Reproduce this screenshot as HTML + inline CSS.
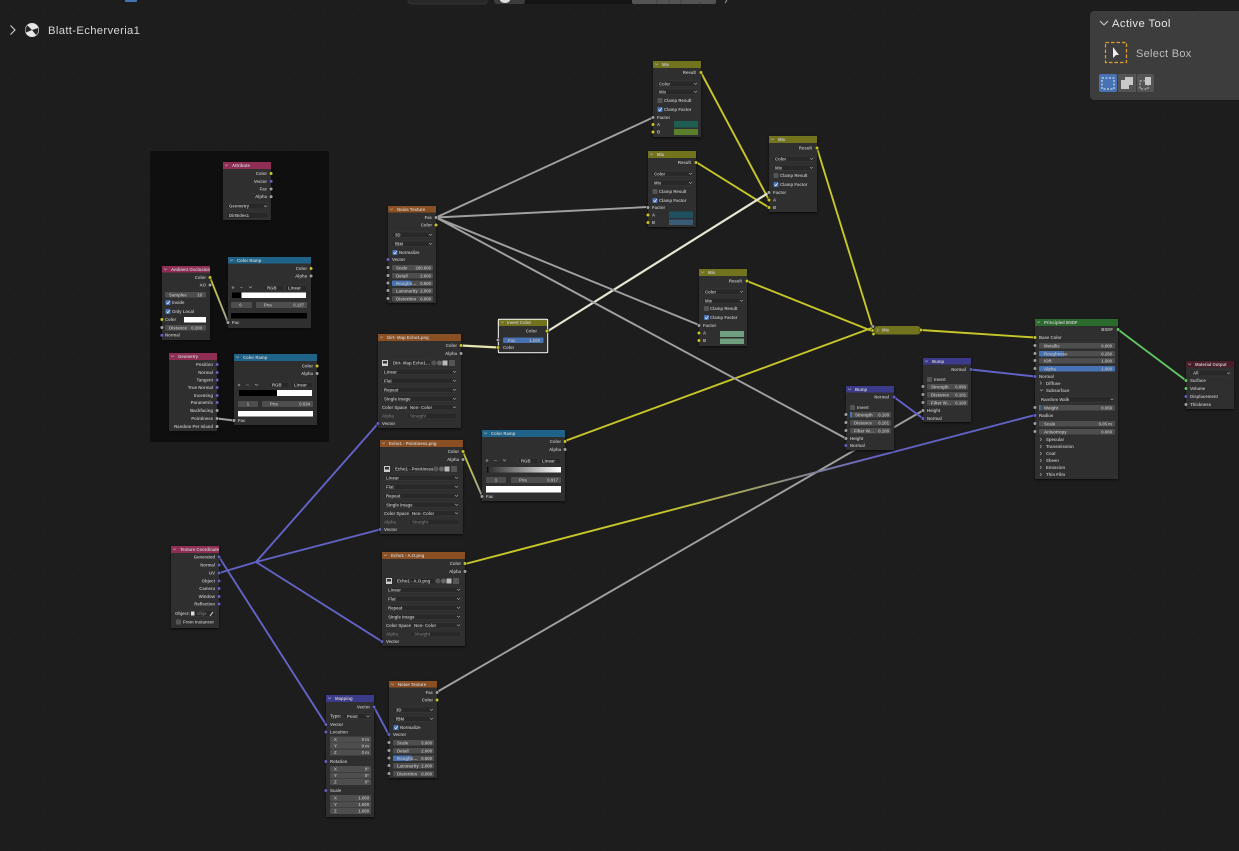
<!DOCTYPE html>
<html><head><meta charset="utf-8"><title>Blatt-Echerveria1</title>
<style>
html,body{margin:0;padding:0;background:#1d1d1d;width:1239px;height:851px;overflow:hidden}
svg{position:absolute;left:0;top:0;display:block}
text{font-family:"Liberation Sans",sans-serif}
.all text{font-size:4.3px;fill:#b4b4b4;font-weight:bold}
.all .h{fill:#c4c4c4}
.all .m{fill:#6c6c6c}
.r{text-anchor:end}
.mid{text-anchor:middle}
.b{fill:#2f2f2f;filter:drop-shadow(0 1px 1px #0a0a0a)}
.f{fill:#4e4e4e}
.d{fill:#282828;stroke:#3f3f3f;stroke-width:.5}
.u{fill:#4772b3}
.c{fill:none;stroke:#aaa;stroke-width:.6}
.k{fill:#545454}
.ck{fill:#4772b3}
.w{fill:none;stroke-width:1.9}
.sy{fill:#c7c729;stroke:#141414;stroke-width:.5}
.sp{fill:#6363c7;stroke:#141414;stroke-width:.5}
.sg{fill:#a1a1a1;stroke:#141414;stroke-width:.5}
.sn{fill:#63c763;stroke:#141414;stroke-width:.5}
.all{filter:blur(.38px)}
</style></head><body>
<svg width="1239" height="851" viewBox="0 0 1239 851" xmlns="http://www.w3.org/2000/svg">
<defs>
<pattern id="grid" x="8" y="8" width="35" height="35" patternUnits="userSpaceOnUse"><circle cx="1" cy="1" r=".8" fill="#252525"/></pattern>
<linearGradient id="g1" gradientUnits="userSpaceOnUse" x1="210" y1="277" x2="228" y2="322"><stop offset="0" stop-color="#c7c729"/><stop offset="1" stop-color="#a1a1a1"/></linearGradient>
<linearGradient id="g2" gradientUnits="userSpaceOnUse" x1="463" y1="452" x2="482" y2="496"><stop offset="0" stop-color="#c7c729"/><stop offset="1" stop-color="#a1a1a1"/></linearGradient>
<linearGradient id="g3" gradientUnits="userSpaceOnUse" x1="465" y1="564" x2="1035" y2="415"><stop offset="0" stop-color="#c7c729"/><stop offset=".35" stop-color="#c7c729"/><stop offset=".72" stop-color="#6363c7"/><stop offset="1" stop-color="#6363c7"/></linearGradient>
<linearGradient id="rg" x1="0" x2="1" y1="0" y2="0"><stop offset="0" stop-color="#000"/><stop offset=".03" stop-color="#333"/><stop offset="1" stop-color="#fff"/></linearGradient>
</defs>
<rect width="1239" height="851" fill="#1d1d1d"/>
<rect width="1239" height="851" fill="url(#grid)"/>

<!-- top clipped header widgets -->
<rect x="125" y="-4" width="12" height="6" rx="1" fill="#4772b3"/>
<rect x="408" y="-6" width="79" height="10" rx="3" fill="#282828" stroke="#3a3a3a" stroke-width=".8"/>
<rect x="494" y="-6" width="31" height="10" rx="3" fill="#3d3d3d"/>
<rect x="525" y="-6" width="107" height="10" fill="#141414"/>
<rect x="632" y="-6" width="84" height="10" rx="2" fill="#545454"/>
<path d="M700 2v2M657 -1v5M681 -1v5M669 0v3" stroke="#3a3a3a" stroke-width=".8"/>
<ellipse cx="505" cy="0" rx="5" ry="3" fill="#ddd"/>
<path d="M725 3l2-3" stroke="#999" stroke-width="1"/>

<!-- breadcrumb -->
<path d="M10.500 25.500l4.500 4.500-4.500 4.500" fill="none" stroke="#d0d0d0" stroke-width="1.100"/>
<circle cx="32" cy="30" r="6.500" fill="#e6e6e6" stroke="#e6e6e6" stroke-width="1"/>
<path d="M32 30L27.500 25.500A6.300 6.300 0 0 0 26 32.500Z" fill="#262626"/>
<path d="M32 30L38 28A6.300 6.300 0 0 1 36 35Z" fill="#262626"/>
<path d="M32 30L32 30" stroke="#000"/>
<text x="48" y="34" font-size="11.300" fill="#d6d6d6" letter-spacing=".33">Blatt-Echerveria1</text>

<!-- active tool panel -->
<rect x="1090" y="10" width="155" height="91" rx="4" fill="#1a1a1a"/>
<rect x="1090" y="11" width="155" height="89" rx="4" fill="#3d3d3d"/>
<path d="M1100 21l4 4 4-4" fill="none" stroke="#cfcfcf" stroke-width="1"/>
<text x="1112" y="27" font-size="11.300" fill="#e6e6e6" letter-spacing=".4">Active Tool</text>
<rect x="1105.500" y="42.500" width="21" height="20" fill="none" stroke="#e0a030" stroke-width="1.200" stroke-dasharray="3.500 2"/>
<path d="M1113 47v11l3-3 3 0z" fill="#eee"/>
<text x="1136" y="57" font-size="11" fill="#bdbdbd" letter-spacing=".3">Select Box</text>
<rect x="1099" y="74" width="18" height="18" rx="2" fill="#4772b3"/>
<rect x="1118" y="74" width="18" height="18" fill="#545454"/>
<rect x="1137" y="74" width="17" height="18" rx="2" fill="#545454"/>
<rect x="1102" y="78" width="12" height="11" fill="none" stroke="#eee" stroke-width="1" stroke-dasharray="2 1.500"/>
<path d="M1121 80h4v-3h8v8h-4v4h-8z" fill="#c8c8c8"/>
<path d="M1145 77h6v8h-6z" fill="#c8c8c8"/>
<rect x="1140" y="81" width="8" height="8" fill="none" stroke="#c8c8c8" stroke-width="1" stroke-dasharray="2 1.500"/>

<g class="all">
<!-- frame -->
<rect x="150" y="151" width="179" height="291" rx="2" fill="#0f0f0f"/>

<!-- wires -->
<g class="w">
<path d="M701 72.500L769 200M696 162L769 207.500M817 148L872 326M747 281L872 331M565 441L873 327.500M921 330L1035 337.500" stroke="#c7c729"/>
<path d="M461 345.500L498 347.500" stroke="#e5e5b0" stroke-width="2.200"/>
<path d="M548 331L769 192.500" stroke="#e6e6d2" stroke-width="2.200"/>
<path d="M436 217.500L653 117.500M436 217.500L648 207M436 217.500L699 325M436 217.500L846 438.500M437 692L923 410.500M217 418.500L234 420.500" stroke="#a1a1a1"/>
<path d="M210 277.500L228 322.500" stroke="url(#g1)"/>
<path d="M463 452L482 496" stroke="url(#g2)"/>
<path d="M465 564L1035 415" stroke="url(#g3)"/>
<path d="M219 557L326 724.500M219 573L256 562M256 562L378 423.500M256 562L380 529.500M256 562L382 641.500M374 707L389 735M894 397L923 418.500M971 369.500L1035 376.500" stroke="#6363c7"/>
<path d="M1118 329.500L1186 380.500" stroke="#63c763"/>
</g>

<!-- Attribute -->
<g transform="translate(223,162)">
<rect class="b" width="48" height="58"/><rect width="48" height="7" fill="#8f2d55"/>
<text class="h" x="9" y="5">Attribute</text><path class="c" d="M2 2.500l1.500 1.500 1.500-1.500"/>
<text class="r" x="44" y="13">Color</text><text class="r" x="44" y="21">Vector</text><text class="r" x="44" y="28.500">Fac</text><text class="r" x="44" y="36">Alpha</text>
<circle class="sy" cx="48" cy="11.500" r="1.800"/><circle class="sp" cx="48" cy="19.300" r="1.800"/><circle class="sg" cx="48" cy="27" r="1.800"/><circle class="sg" cx="48" cy="34.700" r="1.800"/>
<rect class="d" x="3.500" y="41" width="41.500" height="6" rx="1"/><text x="6" y="45.500">Geometry</text><path class="c" d="M41 43.500l1.500 1.500 1.500-1.500"/>
<rect class="d" x="3.500" y="50" width="41.500" height="6.500" rx="1"/><text x="6" y="54.800">DirtEdes1</text>
</g>

<!-- Ambient Occlusion -->
<g transform="translate(162,266)">
<rect class="b" width="48" height="74"/><rect width="48" height="6.500" fill="#8f2d55"/>
<text class="h" x="9" y="5">Ambient Occlusion</text><path class="c" d="M2 2.500l1.500 1.500 1.500-1.500"/>
<text class="r" x="44" y="13">Color</text><text class="r" x="44" y="20.500">AO</text>
<circle class="sy" cx="48" cy="11.500" r="1.800"/><circle class="sg" cx="48" cy="19" r="1.800"/>
<rect class="f" x="3" y="26" width="41" height="5.500" rx="1"/><text x="7" y="30.300">Samples</text><text class="r mm" x="40" y="30.300">16</text>
<rect class="ck" x="3.500" y="34" width="5" height="5" rx=".8"/><path d="M4.500 36.500l1.300 1.300 2-2.600" fill="none" stroke="#fff" stroke-width=".7"/><text x="10" y="38">Inside</text>
<rect class="ck" x="3.500" y="43" width="5" height="5" rx=".8"/><path d="M4.500 45.500l1.300 1.300 2-2.600" fill="none" stroke="#fff" stroke-width=".7"/><text x="10" y="47">Only Local</text>
<text x="3" y="55">Color</text><rect x="22" y="51" width="22" height="5.500" fill="#fff"/>
<rect class="f" x="3" y="59" width="41" height="5.500" rx="1"/><text x="7" y="63.300">Distance</text><text class="r" x="40" y="63.300">0.200</text>
<text x="3" y="70.500">Normal</text>
<circle class="sy" cx="0" cy="53.500" r="1.800"/><circle class="sg" cx="0" cy="61.500" r="1.800"/><circle class="sp" cx="0" cy="69.300" r="1.800"/>
</g>

<!-- Geometry -->
<g transform="translate(169,353)">
<rect class="b" width="48" height="78"/><rect width="48" height="7" fill="#8f2d55"/>
<text class="h" x="9" y="5">Geometry</text><path class="c" d="M2 2.500l1.500 1.500 1.500-1.500"/>
<text class="r" x="44" y="13">Position</text><text class="r" x="44" y="21">Normal</text><text class="r" x="44" y="28.500">Tangent</text><text class="r" x="44" y="36">True Normal</text><text class="r" x="44" y="44">Incoming</text><text class="r" x="44" y="51">Parametric</text><text class="r" x="44" y="59">Backfacing</text><text class="r" x="44" y="67">Pointiness</text><text class="r" x="44" y="75">Random Per Island</text>
<circle class="sp" cx="48" cy="11.500" r="1.800"/><circle class="sp" cx="48" cy="19.500" r="1.800"/><circle class="sp" cx="48" cy="27" r="1.800"/><circle class="sp" cx="48" cy="34.500" r="1.800"/><circle class="sp" cx="48" cy="42.500" r="1.800"/><circle class="sp" cx="48" cy="49.500" r="1.800"/><circle class="sg" cx="48" cy="57.500" r="1.800"/><circle class="sg" cx="48" cy="65.500" r="1.800"/><circle class="sg" cx="48" cy="73.500" r="1.800"/>
</g>

<!-- Color Ramp 1 -->
<g transform="translate(228,257)">
<rect class="b" width="83" height="71"/><rect width="83" height="6.500" fill="#1f6488"/>
<text class="h" x="9" y="5">Color Ramp</text><path class="c" d="M2 2.500l1.500 1.500 1.500-1.500"/>
<text class="r" x="79" y="13">Color</text><text class="r" x="79" y="20.500">Alpha</text>
<circle class="sy" cx="83" cy="11.500" r="1.800"/><circle class="sg" cx="83" cy="19" r="1.800"/>
<circle cx="5" cy="30.500" r="1.300" fill="#777"/><path d="M12 30.500h3" stroke="#777" stroke-width=".7"/><path class="c" d="M21 29.500l1.500 1.500 1.500-1.500"/>
<rect class="d" x="36" y="28" width="20" height="6" rx="1"/><text x="39" y="32.500">RGB</text>
<rect class="d" x="57" y="28" width="22" height="6" rx="1"/><text x="60" y="32.500">Linear</text>
<rect x="4" y="35.500" width="74" height="5.500" fill="#fff"/><rect x="4" y="35.500" width="9.500" height="5.500" fill="#000"/>
<rect class="f" x="3" y="45" width="21" height="6" rx="1"/><text class="mid" x="12.500" y="49.500">0</text>
<rect class="f" x="28" y="45" width="51" height="6" rx="1"/><text x="36" y="49.500">Pos</text><text class="r" x="76" y="49.500">0.137</text>
<rect x="3" y="56" width="76" height="5.500" fill="#000"/>
<text x="4" y="67">Fac</text><circle class="sg" cx="0" cy="65.500" r="1.800"/>
</g>

<!-- Color Ramp 2 -->
<g transform="translate(234,354)">
<rect class="b" width="83" height="71"/><rect width="83" height="7" fill="#1f6488"/>
<text class="h" x="9" y="5">Color Ramp</text><path class="c" d="M2 2.500l1.500 1.500 1.500-1.500"/>
<text class="r" x="79" y="13.500">Color</text><text class="r" x="79" y="21">Alpha</text>
<circle class="sy" cx="83" cy="12" r="1.800"/><circle class="sg" cx="83" cy="19.500" r="1.800"/>
<circle cx="5" cy="31" r="1.300" fill="#777"/><path d="M12 31h3" stroke="#777" stroke-width=".7"/><path class="c" d="M21 30l1.500 1.500 1.500-1.500"/>
<rect class="d" x="35" y="28" width="20" height="6" rx="1"/><text x="38" y="32.500">RGB</text>
<rect class="d" x="57" y="28" width="22" height="6" rx="1"/><text x="60" y="32.500">Linear</text>
<rect x="5" y="36" width="73" height="6" fill="#fff"/><rect x="5" y="36" width="38" height="6" fill="#000"/>
<rect class="f" x="4" y="47" width="20" height="6" rx="1"/><text class="mid" x="14" y="51.500">1</text>
<rect class="f" x="28" y="47" width="51" height="6" rx="1"/><text x="36" y="51.500">Pos</text><text class="r" x="76" y="51.500">0.534</text>
<rect x="4" y="57" width="75" height="5.500" fill="#fff"/>
<text x="4" y="68">Fac</text><circle class="sg" cx="0" cy="66.500" r="1.800"/>
</g>

<!-- Color Ramp 3 -->
<g transform="translate(482,430)">
<rect class="b" width="83" height="71"/><rect width="83" height="7" fill="#1f6488"/>
<text class="h" x="9" y="5">Color Ramp</text><path class="c" d="M2 2.500l1.500 1.500 1.500-1.500"/>
<text class="r" x="79" y="13">Color</text><text class="r" x="79" y="21">Alpha</text>
<circle class="sy" cx="83" cy="11.500" r="1.800"/><circle class="sg" cx="83" cy="19.500" r="1.800"/>
<circle cx="5" cy="30.500" r="1.300" fill="#777"/><path d="M12 30.500h3" stroke="#777" stroke-width=".7"/><path class="c" d="M21 29.500l1.500 1.500 1.500-1.500"/>
<rect class="d" x="36" y="28" width="20" height="6" rx="1"/><text x="39" y="32.500">RGB</text>
<rect class="d" x="57" y="28" width="22" height="6" rx="1"/><text x="60" y="32.500">Linear</text>
<rect x="5" y="37" width="74" height="5.500" fill="url(#rg)"/>
<rect class="f" x="4" y="47" width="20" height="6" rx="1"/><text class="mid" x="14" y="51.500">1</text>
<rect class="f" x="29" y="47" width="50" height="6" rx="1"/><text x="37" y="51.500">Pos</text><text class="r" x="76" y="51.500">0.917</text>
<rect x="4" y="56" width="75" height="6.500" fill="#fff"/>
<text x="4" y="68">Fac</text><circle class="sg" cx="0" cy="66.500" r="1.800"/>
</g>

<!-- Noise Texture 1 -->
<g transform="translate(388,206)">
<rect class="b" width="48" height="97"/><rect width="48" height="6.500" fill="#8a4f22"/>
<text class="h" x="9" y="5">Noise Texture</text><path class="c" d="M2 2.500l1.500 1.500 1.500-1.500"/>
<text class="r" x="44" y="13">Fac</text><text class="r" x="44" y="20.500">Color</text>
<circle class="sg" cx="48" cy="11.500" r="1.800"/><circle class="sy" cx="48" cy="19" r="1.800"/>
<rect class="d" x="4" y="26" width="41" height="5.500" rx="1"/><text x="7" y="30.300">3D</text><path class="c" d="M41 28l1.500 1.500 1.500-1.500"/>
<rect class="d" x="4" y="35" width="41" height="5.500" rx="1"/><text x="7" y="39.300">fBM</text><path class="c" d="M41 37l1.500 1.500 1.500-1.500"/>
<rect class="ck" x="4.500" y="44" width="5" height="5" rx=".8"/><path d="M5.500 46.500l1.300 1.300 2-2.600" fill="none" stroke="#fff" stroke-width=".7"/><text x="11" y="48">Normalize</text>
<text x="4" y="55">Vector</text><circle class="sp" cx="0" cy="53.500" r="1.800"/>
<rect class="f" x="4" y="59" width="41" height="5.500" rx="1"/><text x="8" y="63.300">Scale</text><text class="r" x="43" y="63.300">200.000</text>
<rect class="f" x="4" y="67" width="41" height="5.500" rx="1"/><text x="8" y="71.300">Detail</text><text class="r" x="43" y="71.300">2.000</text>
<rect class="f" x="4" y="74.500" width="41" height="5.500" rx="1"/><rect class="u" x="4" y="74.500" width="19" height="5.500" rx="1"/><text x="8" y="78.800">Roughn…</text><text class="r" x="43" y="78.800">0.500</text>
<rect class="f" x="4" y="82" width="41" height="5.500" rx="1"/><text x="8" y="86.300">Lacunarity</text><text class="r" x="43" y="86.300">2.000</text>
<rect class="f" x="4" y="90" width="41" height="5.500" rx="1"/><text x="8" y="94.300">Distortion</text><text class="r" x="43" y="94.300">0.000</text>
<circle class="sg" cx="0" cy="61.500" r="1.800"/><circle class="sg" cx="0" cy="69.500" r="1.800"/><circle class="sg" cx="0" cy="77" r="1.800"/><circle class="sg" cx="0" cy="84.500" r="1.800"/><circle class="sg" cx="0" cy="92.500" r="1.800"/>
</g>

<!-- Noise Texture 2 -->
<g transform="translate(389,681)">
<rect class="b" width="48" height="97"/><rect width="48" height="6.500" fill="#8a4f22"/>
<text class="h" x="9" y="5">Noise Texture</text><path class="c" d="M2 2.500l1.500 1.500 1.500-1.500"/>
<text class="r" x="44" y="13">Fac</text><text class="r" x="44" y="20.500">Color</text>
<circle class="sg" cx="48" cy="11.500" r="1.800"/><circle class="sy" cx="48" cy="19" r="1.800"/>
<rect class="d" x="4" y="26" width="41" height="5.500" rx="1"/><text x="7" y="30.300">3D</text><path class="c" d="M41 28l1.500 1.500 1.500-1.500"/>
<rect class="d" x="4" y="35" width="41" height="5.500" rx="1"/><text x="7" y="39.300">fBM</text><path class="c" d="M41 37l1.500 1.500 1.500-1.500"/>
<rect class="ck" x="4.500" y="44" width="5" height="5" rx=".8"/><path d="M5.500 46.500l1.300 1.300 2-2.600" fill="none" stroke="#fff" stroke-width=".7"/><text x="11" y="48">Normalize</text>
<text x="4" y="55">Vector</text><circle class="sp" cx="0" cy="53.500" r="1.800"/>
<rect class="f" x="4" y="59" width="41" height="5.500" rx="1"/><text x="8" y="63.300">Scale</text><text class="r" x="43" y="63.300">5.000</text>
<rect class="f" x="4" y="67" width="41" height="5.500" rx="1"/><text x="8" y="71.300">Detail</text><text class="r" x="43" y="71.300">2.000</text>
<rect class="f" x="4" y="74.500" width="41" height="5.500" rx="1"/><rect class="u" x="4" y="74.500" width="19" height="5.500" rx="1"/><text x="8" y="78.800">Roughn…</text><text class="r" x="43" y="78.800">0.500</text>
<rect class="f" x="4" y="82" width="41" height="5.500" rx="1"/><text x="8" y="86.300">Lacunarity</text><text class="r" x="43" y="86.300">2.000</text>
<rect class="f" x="4" y="90" width="41" height="5.500" rx="1"/><text x="8" y="94.300">Distortion</text><text class="r" x="43" y="94.300">0.000</text>
<circle class="sg" cx="0" cy="61.500" r="1.800"/><circle class="sg" cx="0" cy="69.500" r="1.800"/><circle class="sg" cx="0" cy="77" r="1.800"/><circle class="sg" cx="0" cy="84.500" r="1.800"/><circle class="sg" cx="0" cy="92.500" r="1.800"/>
</g>

<!-- Image: Dirt Map -->
<g transform="translate(378,334)">
<rect class="b" width="83" height="94"/><rect width="83" height="7" fill="#8a4f22"/>
<text class="h" x="9" y="5">Dirt- Map Echo1.png</text><path class="c" d="M2 2.500l1.500 1.500 1.500-1.500"/>
<text class="r" x="79" y="13">Color</text><text class="r" x="79" y="21">Alpha</text>
<circle class="sy" cx="83" cy="11.500" r="1.800"/><circle class="sg" cx="83" cy="19.500" r="1.800"/>
<rect x="4" y="26" width="6" height="6" fill="#ccc"/><rect x="5" y="27" width="4" height="2.500" fill="#333"/>
<rect class="d" x="13" y="26" width="40" height="6" rx="1"/><text x="15" y="30.500">Dirt- Map Echo1…</text>
<circle cx="56" cy="29" r="2.500" fill="#555"/><circle cx="61.500" cy="29" r="2.500" fill="#666"/><rect x="64.500" y="26.500" width="5" height="5" fill="#bbb"/><rect x="71" y="26" width="6" height="6" fill="#555"/>
<rect class="d" x="4" y="35" width="75" height="5.500" rx="1"/><text x="6" y="39.300">Linear</text><path class="c" d="M75 37l1.500 1.500 1.500-1.500"/>
<rect class="d" x="4" y="44" width="75" height="5.500" rx="1"/><text x="6" y="48.300">Flat</text><path class="c" d="M75 46l1.500 1.500 1.500-1.500"/>
<rect class="d" x="4" y="53" width="75" height="5.500" rx="1"/><text x="6" y="57.300">Repeat</text><path class="c" d="M75 55l1.500 1.500 1.500-1.500"/>
<rect class="d" x="4" y="62" width="75" height="5.500" rx="1"/><text x="6" y="66.300">Single Image</text><path class="c" d="M75 64l1.500 1.500 1.500-1.500"/>
<text x="4" y="74.800">Color Space</text><rect class="d" x="29" y="70.500" width="50" height="5.500" rx="1"/><text x="32" y="74.800">Non- Color</text><path class="c" d="M75 72.500l1.500 1.500 1.500-1.500"/>
<text class="m" x="4" y="83.500">Alpha</text><rect class="d" x="29" y="79" width="50" height="6" rx="1"/><text class="m" x="32" y="83.500">Straight</text>
<text x="4" y="91">Vector</text><circle class="sp" cx="0" cy="89.500" r="1.800"/>
</g>

<!-- Image: Pointiness -->
<g transform="translate(380,440)">
<rect class="b" width="83" height="94"/><rect width="83" height="7" fill="#8a4f22"/>
<text class="h" x="9" y="5">Echo1 - Pointiness.png</text><path class="c" d="M2 2.500l1.500 1.500 1.500-1.500"/>
<text class="r" x="79" y="13">Color</text><text class="r" x="79" y="21">Alpha</text>
<circle class="sy" cx="83" cy="11.500" r="1.800"/><circle class="sg" cx="83" cy="19.500" r="1.800"/>
<rect x="4" y="26" width="6" height="6" fill="#ccc"/><rect x="5" y="27" width="4" height="2.500" fill="#333"/>
<rect class="d" x="13" y="26" width="40" height="6" rx="1"/><text x="15" y="30.500">Echo1 - Pointiness…</text>
<circle cx="56" cy="29" r="2.500" fill="#555"/><circle cx="61.500" cy="29" r="2.500" fill="#666"/><rect x="64.500" y="26.500" width="5" height="5" fill="#bbb"/><rect x="71" y="26" width="6" height="6" fill="#555"/>
<rect class="d" x="4" y="35" width="75" height="5.500" rx="1"/><text x="6" y="39.300">Linear</text><path class="c" d="M75 37l1.500 1.500 1.500-1.500"/>
<rect class="d" x="4" y="44" width="75" height="5.500" rx="1"/><text x="6" y="48.300">Flat</text><path class="c" d="M75 46l1.500 1.500 1.500-1.500"/>
<rect class="d" x="4" y="53" width="75" height="5.500" rx="1"/><text x="6" y="57.300">Repeat</text><path class="c" d="M75 55l1.500 1.500 1.500-1.500"/>
<rect class="d" x="4" y="62" width="75" height="5.500" rx="1"/><text x="6" y="66.300">Single Image</text><path class="c" d="M75 64l1.500 1.500 1.500-1.500"/>
<text x="4" y="74.800">Color Space</text><rect class="d" x="29" y="70.500" width="50" height="5.500" rx="1"/><text x="32" y="74.800">Non- Color</text><path class="c" d="M75 72.500l1.500 1.500 1.500-1.500"/>
<text class="m" x="4" y="83.500">Alpha</text><rect class="d" x="29" y="79" width="50" height="6" rx="1"/><text class="m" x="32" y="83.500">Straight</text>
<text x="4" y="91">Vector</text><circle class="sp" cx="0" cy="89.500" r="1.800"/>
</g>

<!-- Image: AO -->
<g transform="translate(382,552)">
<rect class="b" width="83" height="94"/><rect width="83" height="7" fill="#8a4f22"/>
<text class="h" x="9" y="5">Echo1 - A.O.png</text><path class="c" d="M2 2.500l1.500 1.500 1.500-1.500"/>
<text class="r" x="79" y="13">Color</text><text class="r" x="79" y="21">Alpha</text>
<circle class="sy" cx="83" cy="11.500" r="1.800"/><circle class="sg" cx="83" cy="19.500" r="1.800"/>
<rect x="4" y="26" width="6" height="6" fill="#ccc"/><rect x="5" y="27" width="4" height="2.500" fill="#333"/>
<rect class="d" x="13" y="26" width="40" height="6" rx="1"/><text x="15" y="30.500">Echo1 - A.O.png</text>
<circle cx="56" cy="29" r="2.500" fill="#555"/><circle cx="61.500" cy="29" r="2.500" fill="#666"/><rect x="64.500" y="26.500" width="5" height="5" fill="#bbb"/><rect x="71" y="26" width="6" height="6" fill="#555"/>
<rect class="d" x="4" y="35" width="75" height="5.500" rx="1"/><text x="6" y="39.300">Linear</text><path class="c" d="M75 37l1.500 1.500 1.500-1.500"/>
<rect class="d" x="4" y="44" width="75" height="5.500" rx="1"/><text x="6" y="48.300">Flat</text><path class="c" d="M75 46l1.500 1.500 1.500-1.500"/>
<rect class="d" x="4" y="53" width="75" height="5.500" rx="1"/><text x="6" y="57.300">Repeat</text><path class="c" d="M75 55l1.500 1.500 1.500-1.500"/>
<rect class="d" x="4" y="62" width="75" height="5.500" rx="1"/><text x="6" y="66.300">Single Image</text><path class="c" d="M75 64l1.500 1.500 1.500-1.500"/>
<text x="4" y="74.800">Color Space</text><rect class="d" x="29" y="70.500" width="50" height="5.500" rx="1"/><text x="32" y="74.800">Non- Color</text><path class="c" d="M75 72.500l1.500 1.500 1.500-1.500"/>
<text class="m" x="4" y="83.500">Alpha</text><rect class="d" x="29" y="79" width="50" height="6" rx="1"/><text class="m" x="32" y="83.500">Straight</text>
<text x="4" y="91">Vector</text><circle class="sp" cx="0" cy="89.500" r="1.800"/>
</g>

<!-- Invert Color -->
<g transform="translate(498,319)">
<rect class="b" width="50" height="34"/><rect width="50" height="7" fill="#72731d"/>
<rect x=".3" y=".3" width="49.400" height="33.400" rx=".8" fill="none" stroke="#fff" stroke-width="1"/>
<text class="h" x="9" y="5">Invert Color</text><path class="c" d="M3 2.500l1.500 1.500 1.500-1.500"/>
<text class="r" x="39" y="13.500">Color</text><circle class="sy" cx="49" cy="12" r="1.800"/>
<rect class="u" x="5" y="18.500" width="40.500" height="5.500" rx="1"/><text x="10" y="22.800">Fac</text><text class="r" x="42" y="22.800">1.000</text>
<text x="5" y="30">Color</text>
<circle class="sg" cx="0" cy="21" r="1.800"/><circle class="sy" cx="0" cy="28.500" r="1.800"/>
</g>

<!-- Mix 1 -->
<g transform="translate(653,61)">
<rect class="b" width="48" height="76"/><rect width="48" height="7" fill="#72731d"/>
<text class="h" x="9" y="5">Mix</text><path class="c" d="M2 2.500l1.500 1.500 1.500-1.500"/>
<text class="r" x="43" y="13">Result</text><circle class="sy" cx="48" cy="11.500" r="1.800"/>
<rect class="d" x="3.500" y="20" width="41.500" height="5.500" rx="1"/><text x="6" y="24.300">Color</text><path class="c" d="M41 22l1.500 1.500 1.500-1.500"/>
<rect class="d" x="3.500" y="28" width="41.500" height="5.500" rx="1"/><text x="6" y="32.300">Mix</text><path class="c" d="M41 30l1.500 1.500 1.500-1.500"/>
<rect class="k" x="4.500" y="37" width="5" height="5" rx=".8"/><text x="11" y="41">Clamp Result</text>
<rect class="ck" x="4.500" y="46" width="5" height="5" rx=".8"/><path d="M5.500 48.500l1.300 1.300 2-2.600" fill="none" stroke="#fff" stroke-width=".7"/><text x="11" y="50">Clamp Factor</text>
<text x="4" y="58">Factor</text><text x="4" y="65">A</text><text x="4" y="72.500">B</text>
<rect x="21" y="60" width="24" height="6.500" fill="#1f5f52"/><rect x="21" y="68" width="24" height="6" fill="#5a7f2d"/>
<circle class="sg" cx="0" cy="56.500" r="1.800"/><circle class="sy" cx="0" cy="63.500" r="1.800"/><circle class="sy" cx="0" cy="71" r="1.800"/>
</g>

<!-- Mix 2 -->
<g transform="translate(648,151)">
<rect class="b" width="48" height="76"/><rect width="48" height="7" fill="#72731d"/>
<text class="h" x="9" y="5">Mix</text><path class="c" d="M2 2.500l1.500 1.500 1.500-1.500"/>
<text class="r" x="43" y="13">Result</text><circle class="sy" cx="48" cy="11.500" r="1.800"/>
<rect class="d" x="3.500" y="20" width="41.500" height="5.500" rx="1"/><text x="6" y="24.300">Color</text><path class="c" d="M41 22l1.500 1.500 1.500-1.500"/>
<rect class="d" x="3.500" y="29" width="41.500" height="5.500" rx="1"/><text x="6" y="33.300">Mix</text><path class="c" d="M41 31l1.500 1.500 1.500-1.500"/>
<rect class="k" x="4.500" y="38" width="5" height="5" rx=".8"/><text x="11" y="42">Clamp Result</text>
<rect class="ck" x="4.500" y="47" width="5" height="5" rx=".8"/><path d="M5.500 49.500l1.300 1.300 2-2.600" fill="none" stroke="#fff" stroke-width=".7"/><text x="11" y="51">Clamp Factor</text>
<text x="4" y="58">Factor</text><text x="4" y="65.500">A</text><text x="4" y="73">B</text>
<rect x="21" y="60.500" width="24" height="6.500" fill="#1e5060"/><rect x="21" y="68.500" width="24" height="5.500" fill="#3a5a78"/>
<circle class="sg" cx="0" cy="56.500" r="1.800"/><circle class="sy" cx="0" cy="64" r="1.800"/><circle class="sy" cx="0" cy="71.500" r="1.800"/>
</g>

<!-- Mix 3 -->
<g transform="translate(769,136)">
<rect class="b" width="48" height="76"/><rect width="48" height="7" fill="#72731d"/>
<text class="h" x="9" y="5">Mix</text><path class="c" d="M2 2.500l1.500 1.500 1.500-1.500"/>
<text class="r" x="43" y="13.500">Result</text><circle class="sy" cx="48" cy="12" r="1.800"/>
<rect class="d" x="3.500" y="20" width="41.500" height="5.500" rx="1"/><text x="6" y="24.300">Color</text><path class="c" d="M41 22l1.500 1.500 1.500-1.500"/>
<rect class="d" x="3.500" y="29" width="41.500" height="5.500" rx="1"/><text x="6" y="33.300">Mix</text><path class="c" d="M41 31l1.500 1.500 1.500-1.500"/>
<rect class="k" x="4.500" y="37" width="5" height="5" rx=".8"/><text x="11" y="41">Clamp Result</text>
<rect class="ck" x="4.500" y="46" width="5" height="5" rx=".8"/><path d="M5.500 48.500l1.300 1.300 2-2.600" fill="none" stroke="#fff" stroke-width=".7"/><text x="11" y="50">Clamp Factor</text>
<text x="4" y="58">Factor</text><text x="4" y="65.500">A</text><text x="4" y="73">B</text>
<circle class="sg" cx="0" cy="56.500" r="1.800"/><circle class="sy" cx="0" cy="64" r="1.800"/><circle class="sy" cx="0" cy="71.500" r="1.800"/>
</g>

<!-- Mix 4 -->
<g transform="translate(699,269)">
<rect class="b" width="48" height="77"/><rect width="48" height="7" fill="#72731d"/>
<text class="h" x="9" y="5">Mix</text><path class="c" d="M2 2.500l1.500 1.500 1.500-1.500"/>
<text class="r" x="43" y="13.500">Result</text><circle class="sy" cx="48" cy="12" r="1.800"/>
<rect class="d" x="3.500" y="20" width="41.500" height="5.500" rx="1"/><text x="6" y="24.300">Color</text><path class="c" d="M41 22l1.500 1.500 1.500-1.500"/>
<rect class="d" x="3.500" y="29" width="41.500" height="5.500" rx="1"/><text x="6" y="33.300">Mix</text><path class="c" d="M41 31l1.500 1.500 1.500-1.500"/>
<rect class="k" x="5" y="37" width="5" height="5" rx=".8"/><text x="11" y="41">Clamp Result</text>
<rect class="ck" x="5" y="46" width="5" height="5" rx=".8"/><path d="M6 48.500l1.300 1.300 2-2.600" fill="none" stroke="#fff" stroke-width=".7"/><text x="11" y="50">Clamp Factor</text>
<text x="4" y="58">Factor</text><text x="4" y="65.500">A</text><text x="4" y="73">B</text>
<rect x="21" y="62" width="24" height="6" fill="#6f9f7f"/><rect x="21" y="69.500" width="24" height="5.500" fill="#6f9f7f"/>
<circle class="sg" cx="0" cy="56.500" r="1.800"/><circle class="sy" cx="0" cy="64" r="1.800"/><circle class="sy" cx="0" cy="71.500" r="1.800"/>
</g>

<!-- Collapsed Mix -->
<rect x="874" y="326" width="47" height="8.500" rx="4" fill="#72731d"/>
<text class="h" x="882" y="331.500">Mix</text><path class="c" d="M877 328.500l1.500 1.500-1.500 1.500"/>
<circle class="sg" cx="873" cy="326.500" r="1.700"/><circle class="sy" cx="872.500" cy="330.500" r="1.700"/><circle class="sy" cx="873.500" cy="334" r="1.700"/><circle class="sy" cx="921" cy="330" r="1.700"/>

<!-- Bump 1 -->
<g transform="translate(846,386)">
<rect class="b" width="48" height="64"/><rect width="48" height="6.500" fill="#3c3a8a"/>
<text class="h" x="9" y="5">Bump</text><path class="c" d="M2 2.500l1.500 1.500 1.500-1.500"/>
<text class="r" x="43" y="12.500">Normal</text><circle class="sp" cx="48" cy="11" r="1.800"/>
<rect class="k" x="4" y="19" width="5" height="5" rx=".8"/><text x="11" y="23">Invert</text>
<rect class="f" x="4" y="26" width="41" height="5.500" rx="1"/><rect class="u" x="4" y="26" width="2" height="5.500"/><text x="9" y="30.300">Strength</text><text class="r" x="43" y="30.300">0.100</text>
<rect class="f" x="4" y="34" width="41" height="5.500" rx="1"/><text x="8" y="38.300">Distance</text><text class="r" x="43" y="38.300">0.101</text>
<rect class="f" x="4" y="42" width="41" height="5.500" rx="1"/><text x="8" y="46.300">Filter W…</text><text class="r" x="43" y="46.300">0.100</text>
<text x="4" y="54">Height</text><text x="4" y="61">Normal</text>
<circle class="sg" cx="0" cy="28.500" r="1.800"/><circle class="sg" cx="0" cy="36.500" r="1.800"/><circle class="sg" cx="0" cy="44.500" r="1.800"/><circle class="sg" cx="0" cy="52.500" r="1.800"/><circle class="sp" cx="0" cy="59.500" r="1.800"/>
</g>

<!-- Bump 2 -->
<g transform="translate(923,358)">
<rect class="b" width="48" height="64"/><rect width="48" height="6.500" fill="#3c3a8a"/>
<text class="h" x="9" y="5">Bump</text><path class="c" d="M2 2.500l1.500 1.500 1.500-1.500"/>
<text class="r" x="43" y="13">Normal</text><circle class="sp" cx="48" cy="11.500" r="1.800"/>
<rect class="k" x="4" y="19" width="5" height="5" rx=".8"/><text x="11" y="23">Invert</text>
<rect class="f" x="4" y="26" width="41" height="5.500" rx="1"/><text x="8" y="30.300">Strength</text><text class="r" x="43" y="30.300">0.050</text>
<rect class="f" x="4" y="34" width="41" height="5.500" rx="1"/><text x="8" y="38.300">Distance</text><text class="r" x="43" y="38.300">0.101</text>
<rect class="f" x="4" y="42" width="41" height="5.500" rx="1"/><text x="8" y="46.300">Filter W…</text><text class="r" x="43" y="46.300">0.100</text>
<text x="4" y="54">Height</text><text x="4" y="62">Normal</text>
<circle class="sg" cx="0" cy="28.500" r="1.800"/><circle class="sg" cx="0" cy="36.500" r="1.800"/><circle class="sg" cx="0" cy="44.500" r="1.800"/><circle class="sg" cx="0" cy="52.500" r="1.800"/><circle class="sp" cx="0" cy="60.500" r="1.800"/>
</g>

<!-- Principled BSDF -->
<g transform="translate(1035,319)">
<rect class="b" width="83" height="160"/><rect width="83" height="7" fill="#2c6b2e"/>
<text class="h" x="9" y="5">Principled BSDF</text><path class="c" d="M2 2.500l1.500 1.500 1.500-1.500"/>
<text class="r" x="78" y="12">BSDF</text><circle class="sn" cx="83" cy="10.500" r="1.800"/>
<text x="4" y="20">Base Color</text><circle class="sy" cx="0" cy="18.500" r="1.800"/>
<rect class="f" x="4" y="24" width="76" height="5.500" rx="1"/><text x="9" y="28.300">Metallic</text><text class="r" x="77" y="28.300">0.000</text>
<rect class="f" x="4" y="32" width="76" height="5.500" rx="1"/><rect class="u" x="4" y="32" width="25" height="5.500" rx="1"/><text x="9" y="36.300">Roughness</text><text class="r" x="77" y="36.300">0.250</text>
<rect class="f" x="4" y="39" width="76" height="5.500" rx="1"/><text x="9" y="43.300">IOR</text><text class="r" x="77" y="43.300">1.500</text>
<rect class="u" x="4" y="47" width="76" height="5.500" rx="1"/><text x="9" y="51.300">Alpha</text><text class="r" x="77" y="51.300">1.000</text>
<circle class="sg" cx="0" cy="26.500" r="1.800"/><circle class="sg" cx="0" cy="34.500" r="1.800"/><circle class="sg" cx="0" cy="41.500" r="1.800"/><circle class="sg" cx="0" cy="49.500" r="1.800"/>
<text x="4" y="59">Normal</text><circle class="sp" cx="0" cy="57.500" r="1.800"/>
<path class="c" d="M5 62.500l1.500 1.500-1.500 1.500"/><text x="11" y="66">Diffuse</text>
<path class="c" d="M5 70.500l1.500 1.500 1.500-1.500"/><text x="11" y="73">Subsurface</text>
<rect class="d" x="3.500" y="77.500" width="76.500" height="5.500" rx="1"/><text x="6" y="81.800">Random Walk</text><path class="c" d="M75.500 79.500l1.500 1.500 1.500-1.500"/>
<rect class="f" x="4" y="86" width="76" height="5.500" rx="1"/><rect class="u" x="4" y="86" width="1.500" height="5.500"/><text x="9" y="90.300">Weight</text><text class="r" x="77" y="90.300">0.050</text><circle class="sg" cx="0" cy="88.500" r="1.800"/>
<text x="4" y="98">Radius</text><circle class="sp" cx="0" cy="96.500" r="1.800"/>
<rect class="f" x="4" y="102" width="76" height="5.500" rx="1"/><text x="9" y="106.300">Scale</text><text class="r" x="77" y="106.300">0.05 m</text><circle class="sg" cx="0" cy="104.500" r="1.800"/>
<rect class="f" x="4" y="110" width="76" height="5.500" rx="1"/><text x="9" y="114.300">Anisotropy</text><text class="r" x="77" y="114.300">0.000</text><circle class="sg" cx="0" cy="112.500" r="1.800"/>
<path class="c" d="M5 119l1.500 1.500-1.500 1.500"/><text x="11" y="122">Specular</text>
<path class="c" d="M5 126l1.500 1.500-1.500 1.500"/><text x="11" y="129">Transmission</text>
<path class="c" d="M5 133l1.500 1.500-1.500 1.500"/><text x="11" y="136">Coat</text>
<path class="c" d="M5 140l1.500 1.500-1.500 1.500"/><text x="11" y="143">Sheen</text>
<path class="c" d="M5 147l1.500 1.500-1.500 1.500"/><text x="11" y="150">Emission</text>
<path class="c" d="M5 154l1.500 1.500-1.500 1.500"/><text x="11" y="157">Thin Film</text>
</g>

<!-- Material Output -->
<g transform="translate(1186,361)">
<rect class="b" width="48" height="48"/><rect width="48" height="6.500" fill="#4a1d2a"/>
<text class="h" x="9" y="5">Material Output</text><path class="c" d="M2 2.500l1.500 1.500 1.500-1.500"/>
<rect class="d" x="4" y="9" width="41" height="6" rx="1"/><text x="7" y="13.500">All</text><path class="c" d="M41 11.500l1.500 1.500 1.500-1.500"/>
<text x="4" y="21">Surface</text><text x="4" y="29">Volume</text><text x="4" y="37">Displacement</text><text x="4" y="45">Thickness</text>
<circle class="sn" cx="0" cy="19.500" r="1.800"/><circle class="sn" cx="0" cy="27.500" r="1.800"/><circle class="sp" cx="0" cy="35.500" r="1.800"/><circle class="sg" cx="0" cy="43.500" r="1.800"/>
</g>

<!-- Texture Coordinate -->
<g transform="translate(171,546)">
<rect class="b" width="48" height="82"/><rect width="48" height="7" fill="#8f2d55"/>
<text class="h" x="9" y="5">Texture Coordinate</text><path class="c" d="M2 2.500l1.500 1.500 1.500-1.500"/>
<text class="r" x="44" y="12.500">Generated</text><text class="r" x="44" y="20.500">Normal</text><text class="r" x="44" y="28.500">UV</text><text class="r" x="44" y="36.500">Object</text><text class="r" x="44" y="44">Camera</text><text class="r" x="44" y="52">Window</text><text class="r" x="44" y="59.500">Reflection</text>
<circle class="sp" cx="48" cy="11" r="1.800"/><circle class="sp" cx="48" cy="19" r="1.800"/><circle class="sp" cx="48" cy="27" r="1.800"/><circle class="sp" cx="48" cy="35" r="1.800"/><circle class="sp" cx="48" cy="42.500" r="1.800"/><circle class="sp" cx="48" cy="50.500" r="1.800"/><circle class="sp" cx="48" cy="58" r="1.800"/>
<text x="4" y="69">Object:</text><rect class="d" x="19" y="64.500" width="25" height="6" rx="1"/><rect x="20" y="65.500" width="3.500" height="4" fill="#ddd"/><text class="m" x="26" y="69">Obje</text><path d="M39 70l3-4" stroke="#ddd" stroke-width="1"/>
<rect class="k" x="5" y="73.500" width="5" height="5" rx=".8"/><text x="12" y="77.500">From Instancer</text>
</g>

<!-- Mapping -->
<g transform="translate(326,695)">
<rect class="b" width="48" height="122"/><rect width="48" height="7" fill="#3c3a8a"/>
<text class="h" x="9" y="5">Mapping</text><path class="c" d="M2 2.500l1.500 1.500 1.500-1.500"/>
<text class="r" x="44" y="13.500">Vector</text><circle class="sp" cx="48" cy="12" r="1.800"/>
<text x="4" y="22.500">Type:</text><rect class="d" x="18" y="18.500" width="27" height="5.500" rx="1"/><text x="21" y="22.800">Point</text><path class="c" d="M40.500 20.500l1.500 1.500 1.500-1.500"/>
<text x="4" y="31">Vector</text><circle class="sp" cx="0" cy="29.500" r="1.800"/>
<text x="4" y="38.500">Location</text><circle class="sp" cx="0" cy="37" r="1.800"/>
<rect class="f" x="4" y="41.500" width="41" height="6" rx="1"/><text x="8" y="46">X</text><text class="r" x="43" y="46">0 m</text>
<rect class="f" x="4" y="47.800" width="41" height="6" rx="1"/><text x="8" y="52.300">Y</text><text class="r" x="43" y="52.300">0 m</text>
<rect class="f" x="4" y="54.500" width="41" height="6" rx="1"/><text x="8" y="59">Z</text><text class="r" x="43" y="59">0 m</text>
<text x="4" y="68">Rotation</text><circle class="sp" cx="0" cy="66.500" r="1.800"/>
<rect class="f" x="4" y="71" width="41" height="6" rx="1"/><text x="8" y="75.500">X</text><text class="r" x="43" y="75.500">0°</text>
<rect class="f" x="4" y="77.500" width="41" height="6" rx="1"/><text x="8" y="82">Y</text><text class="r" x="43" y="82">0°</text>
<rect class="f" x="4" y="84" width="41" height="6" rx="1"/><text x="8" y="88.500">Z</text><text class="r" x="43" y="88.500">0°</text>
<text x="4" y="97">Scale</text><circle class="sp" cx="0" cy="95.500" r="1.800"/>
<rect class="f" x="4" y="100" width="41" height="6" rx="1"/><text x="8" y="104.500">X</text><text class="r" x="43" y="104.500">1.000</text>
<rect class="f" x="4" y="106.500" width="41" height="6" rx="1"/><text x="8" y="111">Y</text><text class="r" x="43" y="111">1.000</text>
<rect class="f" x="4" y="113" width="41" height="6" rx="1"/><text x="8" y="117.500">Z</text><text class="r" x="43" y="117.500">1.000</text>
</g>
</g>
</svg>
</body></html>
